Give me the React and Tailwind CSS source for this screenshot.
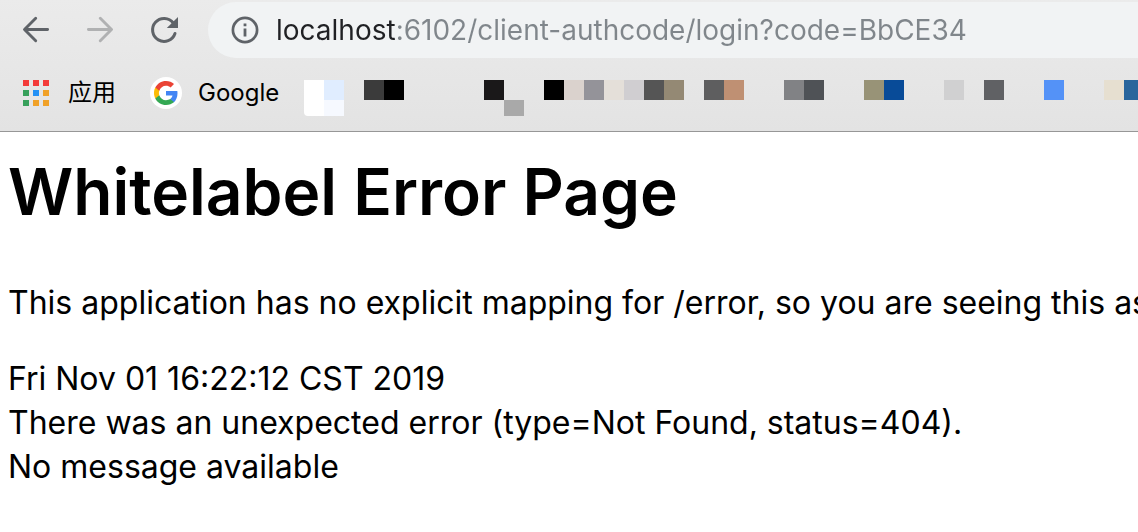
const columns = [
  ["bg-white", "bg-white rounded-bl-sm"],
  ["bg-[#e0edff]", "bg-[#f6f9ff]"],
  [],
  ["bg-[#3b3b3b]"],
  ["bg-black"],
  [], [], [], [],
  ["bg-[#1a1819]"],
  ["", "bg-[#a9a9a9]"],
  [],
  ["bg-black"],
  ["bg-[#dad2cd]"],
  ["bg-[#949399]"],
  ["bg-[#e4dfd9]"],
  ["bg-[#d0ced1]"],
  ["bg-[#555555]"],
  ["bg-[#948974]"],
  [],
  ["bg-[#5e5e5f]"],
  ["bg-[#bf9073]"],
  [], [],
  ["bg-[#818285]"],
  ["bg-[#4f5256]"],
  [], [],
  ["bg-[#989377]"],
  ["bg-[#084b98]"],
  [], [],
  ["bg-[#d0d0d1]"],
  [],
  ["bg-[#606164]"],
  [], [],
  ["bg-[#5492f7]"],
  [], [],
  ["bg-[#e6dfd0]"],
  ["bg-[#29669c]"],
];

function Arrow() {
  return (
    <svg viewBox="0 0 32 32" className="size-8" fill="none" stroke="currentColor" strokeWidth="2.9" strokeLinecap="round" strokeLinejoin="round" aria-hidden="true">
      <path d="M27.6 15.5H5M15.7 4.300 4.500 15.500l11.200 11.200" />
    </svg>
  );
}

function Reload() {
  return (
    <svg viewBox="0 0 32 32" className="size-8" aria-hidden="true">
      <path d="M27 19.500A11.500 11.500 0 1 1 25.300 9" fill="none" stroke="currentColor" strokeWidth="3" strokeLinecap="round" />
      <path d="M30 3v11H18.800z" fill="currentColor" />
    </svg>
  );
}

function Info() {
  return (
    <svg viewBox="0 0 28 28" className="size-7 shrink-0" aria-hidden="true">
      <circle cx="14" cy="14" r="12.1" fill="none" stroke="currentColor" strokeWidth="2.7" />
      <path d="M12.6 7.5h2.8v2.8h-2.8zM12.6 12.6h2.8v8h-2.8z" fill="currentColor" />
    </svg>
  );
}

function AppsIcon() {
  return (
    <svg viewBox="0 0 26 26" className="size-6.5" aria-hidden="true">
      <path d="M0 0h6v6H0zM10 0h6v6h-6zM20 0h6v6h-6z" fill="#f33b3a" />
      <path d="M0 10h6v6H0zM0 20h6v6H0z" fill="#37a05b" />
      <path d="M10 10h6v6h-6z" fill="#2390f5" />
      <path d="M20 10h6v6h-6zM10 20h6v6h-6zM20 20h6v6h-6z" fill="#f0a128" />
    </svg>
  );
}

function GoogleIcon() {
  return (
    <svg viewBox="0 0 32 32" className="size-8" aria-hidden="true">
      <circle cx="16" cy="16" r="16" fill="#fff" />
      <g transform="translate(4 4)">
        <path fill="#4285f4" d="M23.5 12.3c0-.9-.1-1.600-.2-2.300H12v4.600h6.500c-.3 1.500-1.100 2.700-2.400 3.600v3h3.900c2.200-2.100 3.500-5.200 3.500-8.900z" />
        <path fill="#34a853" d="M12 24c3.200 0 6-1.100 8-2.900l-3.900-3c-1.100.7-2.500 1.200-4.100 1.200-3.100 0-5.800-2.100-6.700-5H1.300v3.100C3.300 21.300 7.300 24 12 24z" />
        <path fill="#fbbc05" d="M5.300 14.300c-.2-.7-.4-1.500-.4-2.300s.1-1.600.4-2.300V6.600H1.300C.5 8.200 0 10 0 12s.5 3.800 1.300 5.400z" />
        <path fill="#ea4335" d="M12 4.700c1.800 0 3.300.6 4.600 1.800L20 3.100C18 1.200 15.200 0 12 0 7.300 0 3.300 2.700 1.300 6.600l4 3.100c.9-2.900 3.600-5 6.700-5z" />
      </g>
    </svg>
  );
}

export default function App() {
  return (
    <div className="overflow-hidden bg-white font-['Inter','Noto_Sans_CJK_SC',sans-serif] text-black">
      <header className="border-b border-[#979797] bg-linear-to-b from-[#ebebeb] to-[#e3e3e3]">
        <nav className="flex items-center pt-0.5 pl-5 text-[#5f6368]">
          <button type="button" aria-label="Back" className="mr-8"><Arrow /></button>
          <button type="button" aria-label="Forward" className="mr-8 -scale-x-100 text-[#b0b1b2]" disabled><Arrow /></button>
          <button type="button" aria-label="Reload" className="mr-7"><Reload /></button>
          <div className="flex h-14 min-w-0 flex-1 items-center gap-[17px] rounded-l-full bg-[#f1f3f4] pl-[23px]">
            <button type="button" aria-label="Site information"><Info /></button>
            <input
              type="text"
              aria-label="Address"
              defaultValue="localhost:6102/client-authcode/login?code=BbCE34"
              className="h-10 min-w-0 flex-1 bg-[linear-gradient(to_right,#202124_120px,#80868b_120px)] bg-clip-text text-[28px] text-transparent caret-black outline-none"
            />
          </div>
        </nav>
        <div className="flex h-[73px] pt-[19px] pl-[23px] text-2xl">
          <a href="#apps" className="mr-[34px] flex h-8 items-center gap-[19px] whitespace-nowrap">
            <AppsIcon />应用
          </a>
          <a href="#google" className="flex h-8 w-[154px] shrink-0 items-center gap-4 whitespace-nowrap">
            <GoogleIcon />Google
          </a>
          <div className="flex min-w-0 flex-1 overflow-hidden pt-[3px]" aria-hidden="true">
            {columns.map(([top = "", bottom = ""], i) => (
              <div key={i} className="w-5 shrink-0">
                <div className={`h-5 ${top}`} />
                <div className={`h-4 ${bottom}`} />
              </div>
            ))}
          </div>
        </div>
      </header>
      <main className="px-2 pt-4 pb-10 text-[32px] leading-11">
        <h1 className="mb-[45px] text-[64px] leading-[88px] font-semibold whitespace-nowrap">Whitelabel Error Page</h1>
        <p className="mb-8 whitespace-nowrap">This application has no explicit mapping for /error, so you are seeing this as</p>
        <div>Fri Nov 01 16:22:12 CST 2019</div>
        <div>There was an unexpected error (type=Not Found, status=404).</div>
        <div>No message available</div>
      </main>
    </div>
  );
}
